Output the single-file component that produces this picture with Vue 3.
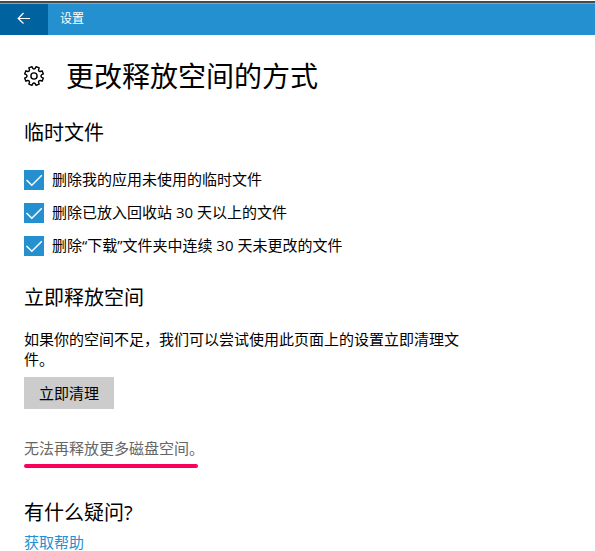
<script setup>
import { reactive } from 'vue'

const options = reactive([
  { id: 'temp', label: '删除我的应用未使用的临时文件', checked: true },
  { id: 'recycle', label: '删除已放入回收站 30 天以上的文件', checked: true },
  { id: 'downloads', label: '删除“下载”文件夹中连续 30 天未更改的文件', checked: true },
])

const teeth = Array.from({ length: 8 }, (_, i) => i * 45 + 22.5)
const point = (r, deg) => {
  const a = (deg * Math.PI) / 180
  return `${(10 + r * Math.sin(a)).toFixed(2)} ${(10 - r * Math.cos(a)).toFixed(2)}`
}
// Outline of an eight-toothed gear with rounded valleys
const gearPath =
  teeth
    .map((t, i) => {
      const start = `${i ? 'L' : 'M'}${point(9.6, t - 10)}`
      return `${start} L${point(9.6, t + 10)} L${point(7.8, t + 13)} Q${point(6.2, t + 22.5)} ${point(7.8, t + 32)}`
    })
    .join(' ') + ' Z'
</script>

<template>
  <div class="window">
    <header class="titlebar">
      <button class="back" type="button" aria-label="返回">
        <svg width="14" height="12" viewBox="0 0 14 12" aria-hidden="true">
          <path d="M13 6.5H1.5M6.5 1L1.2 6.5L6.5 11.5" />
        </svg>
      </button>
      <span class="app-name">设置</span>
    </header>

    <main class="page">
      <div class="heading">
        <svg class="gear" width="20" height="20" viewBox="0 0 20 20" aria-hidden="true">
          <path :d="gearPath" />
          <circle cx="10" cy="10" r="3.1" />
        </svg>
        <h1>更改释放空间的方式</h1>
      </div>

      <section class="temp-files">
        <h2>临时文件</h2>
        <ul class="options">
          <li v-for="option in options" :key="option.id">
            <label class="option" :for="option.id">
              <span class="box">
                <input :id="option.id" v-model="option.checked" type="checkbox" />
                <svg v-if="option.checked" width="20" height="20" viewBox="0 0 20 20" aria-hidden="true">
                  <path d="M2.5 10L7.8 15.3L17.8 5.2" />
                </svg>
              </span>
              <span class="option-text">{{ option.label }}</span>
            </label>
          </li>
        </ul>
      </section>

      <section class="free-space">
        <h2>立即释放空间</h2>
        <p class="description">如果你的空间不足，我们可以尝试使用此页面上的设置立即清理文件。</p>
        <button class="clean" type="button">立即清理</button>
        <p class="status">无法再释放更多磁盘空间。</p>
      </section>

      <section class="help">
        <h2>有什么疑问?</h2>
        <a href="#help">获取帮助</a>
      </section>
    </main>
  </div>
</template>

<style>
body {
  margin: 0;
  background: #fff;
}
</style>

<style scoped>
.window {
  font-family: "Open Sans", "Noto Sans CJK SC", sans-serif;
  font-size: 15px;
  line-height: 20px;
  color: #000;
}

h1,
h2,
p,
ul {
  margin: 0;
  padding: 0;
  font-weight: 400;
}

button {
  border: 0;
  border-radius: 0;
  padding: 0;
  font: inherit;
  color: inherit;
}

.titlebar {
  display: flex;
  height: 31px;
  margin-top: 1px;
  border-top: 2px solid #4a4a4a;
  background: #2590d0;
  color: #fff;
  box-shadow: inset 0 1px #58b4ea;
  padding-top: 1px;
}

.back {
  display: flex;
  align-items: center;
  justify-content: center;
  width: 48px;
  padding-bottom: 3px;
  background: #00629f;
}

.back path {
  fill: none;
  stroke: #fff;
  stroke-width: 1.2;
}

.app-name {
  padding-left: 12px;
  font-size: 12px;
  line-height: 29px;
}

.page {
  padding: 21px 24px 0;
}

.heading {
  display: flex;
  align-items: center;
  gap: 22px;
}

.gear {
  flex: none;
  overflow: visible;
  fill: none;
  stroke: #000;
  stroke-width: 1.4;
  stroke-linejoin: round;
}

h1 {
  font-size: 28px;
  line-height: 40px;
}

h2 {
  font-size: 20px;
  line-height: 28px;
}

.temp-files {
  margin-top: 23px;
}

.options {
  display: grid;
  gap: 13px;
  margin-top: 23px;
  list-style: none;
}

.option {
  display: flex;
  gap: 8px;
}

.option-text {
  line-height: 18px;
}

.box {
  display: grid;
  flex: none;
  width: 20px;
  height: 20px;
}

.box > * {
  grid-area: 1 / 1;
}

.box input {
  appearance: none;
  width: 20px;
  height: 20px;
  margin: 0;
  border: 2px solid #2590d0;
}

.box input:checked {
  background: #2590d0;
}

.box svg {
  pointer-events: none;
}

.box path {
  fill: none;
  stroke: #fff;
  stroke-width: 1.5;
}

.free-space {
  margin-top: 28px;
}

.description {
  max-width: 440px;
  margin-top: 17px;
}

.clean {
  display: block;
  margin-top: 8px;
  padding: 6px 15px;
  background: #ccc;
}

.status {
  width: fit-content;
  margin-top: 29px;
  color: #666;
}

.status::after {
  content: "";
  display: block;
  width: 174px;
  height: 4px;
  margin-top: 6px;
  border-radius: 2px;
  background: #f9005c;
}

.help {
  margin-top: 31px;
}

.help a {
  display: block;
  width: fit-content;
  margin-top: 6px;
  line-height: 18px;
  color: #2590d0;
  text-decoration: none;
}
</style>
